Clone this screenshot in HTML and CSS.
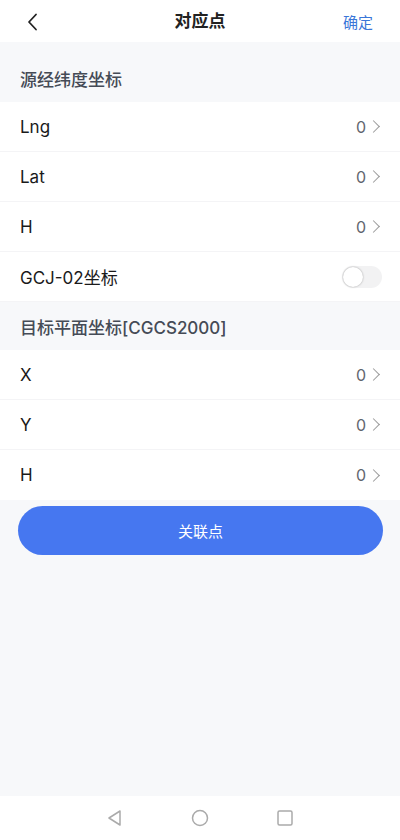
FILE: index.html
```html
<!DOCTYPE html>
<html lang="zh-CN">
<head>
<meta charset="UTF-8">
<meta name="viewport" content="width=device-width, initial-scale=1.0">
<title>对应点</title>
<link rel="stylesheet" href="styles.css">
</head>
<body>
    <div class="page">
        <header class="topbar">
            <span class="back">
                <svg width="14" height="18" viewBox="0 0 14 18"><path d="M10 1.5 L3 9 L10 16.5" fill="none" stroke="#222" stroke-width="1.8" stroke-linecap="round" stroke-linejoin="round"/></svg>
            </span>
            <h1 class="title">对应点</h1>
            <span class="confirm">确定</span>
        </header>

        <main class="content">
            <div class="section-title first">源经纬度坐标</div>
            <div class="cell">
                <span class="label">Lng</span>
                <span class="value">0<i class="arrow"></i></span>
            </div>
            <div class="cell">
                <span class="label">Lat</span>
                <span class="value">0<i class="arrow"></i></span>
            </div>
            <div class="cell">
                <span class="label">H</span>
                <span class="value">0<i class="arrow"></i></span>
            </div>
            <div class="cell">
                <span class="label">GCJ-02坐标</span>
                <span class="switch"><span class="knob"></span></span>
            </div>

            <div class="section-title">目标平面坐标[CGCS2000]</div>
            <div class="cell">
                <span class="label">X</span>
                <span class="value">0<i class="arrow"></i></span>
            </div>
            <div class="cell">
                <span class="label">Y</span>
                <span class="value">0<i class="arrow"></i></span>
            </div>
            <div class="cell">
                <span class="label">H</span>
                <span class="value">0<i class="arrow"></i></span>
            </div>

            <button class="link-btn">关联点</button>
        </main>

        <nav class="navbar">
            <svg width="18" height="18" viewBox="0 0 18 18"><path d="M14 2 L3 9 L14 16 Z" fill="none" stroke="#aaa" stroke-width="1.5" stroke-linejoin="round"/></svg>
            <svg width="18" height="18" viewBox="0 0 18 18"><circle cx="9" cy="9" r="7.5" fill="none" stroke="#aaa" stroke-width="1.5"/></svg>
            <svg width="18" height="18" viewBox="0 0 18 18"><rect x="2" y="2" width="14" height="14" rx="1.5" fill="none" stroke="#aaa" stroke-width="1.5"/></svg>
        </nav>
    </div>
</body>
</html>
```

FILE: styles.css
```css
* {
    box-sizing: border-box;
}
body {
    margin: 0;
    font-family: Inter, "Noto Sans CJK SC", sans-serif;
    background-color: #f7f8fa;
    color: #222;
}
.page {
    height: 840px;
    display: flex;
    flex-direction: column;
}
.topbar {
    height: 42px;
    background-color: #fff;
    display: flex;
    align-items: center;
    justify-content: space-between;
    padding: 0 27px 0 26px;
    position: relative;
}
.back {
    display: flex;
    padding-top: 1px;
}
.title {
    position: absolute;
    left: 0;
    right: 0;
    margin: 0;
    text-align: center;
    font-size: 17px;
    font-weight: bold;
    line-height: 38px;
    pointer-events: none;
}
.confirm {
    color: #3a76d8;
    font-size: 15px;
}
.content {
    flex: 1;
}
.section-title {
    height: 48px;
    padding: 0 20px;
    display: flex;
    align-items: center;
    font-size: 17px;
    font-weight: 500;
    color: #454b56;
}
.section-title.first {
    height: 60px;
    padding-top: 12px;
}
.cell {
    height: 50px;
    background-color: #fff;
    border-bottom: 1px solid #f4f4f6;
    display: flex;
    align-items: center;
    justify-content: space-between;
    padding: 0 18px 0 20px;
    font-size: 17px;
}
.cell:nth-last-of-type(1) {
    border-bottom: none;
}
.label {
    color: #1a1a1a;
}
.value {
    display: flex;
    align-items: center;
    color: #62666f;
    font-size: 16px;
}
.arrow {
    width: 9px;
    height: 9px;
    border-top: 1.5px solid #9a9a9a;
    border-right: 1.5px solid #9a9a9a;
    transform: rotate(45deg);
    margin: 0 4px 0 3px;
}
.switch {
    width: 40px;
    height: 22px;
    border-radius: 11px;
    background-color: #f2f2f3;
    display: flex;
    align-items: center;
    padding: 1px;
}
.knob {
    width: 20px;
    height: 20px;
    border-radius: 50%;
    background-color: #fff;
    box-shadow: 0 0 2px rgba(0, 0, 0, 0.35);
}
.link-btn {
    display: block;
    width: 365px;
    height: 49px;
    margin: 6px 0 0 18px;
    border: none;
    border-radius: 25px;
    background-color: #4677f0;
    color: #fff;
    font-size: 15px;
    font-family: inherit;
}
.navbar {
    height: 44px;
    background-color: #fff;
    display: flex;
    align-items: center;
    justify-content: center;
    gap: 67px;
}
```
